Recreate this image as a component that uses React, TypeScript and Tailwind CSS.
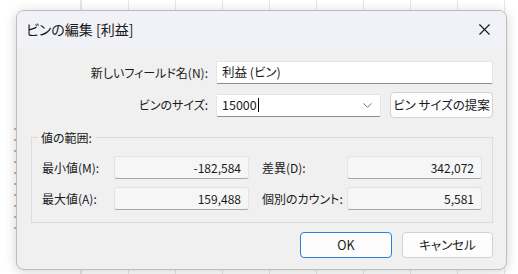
import { X, ChevronDown } from 'lucide-react'

const FONT = '"Noto Sans CJK JP", "Noto Sans", sans-serif'

function ReadField({ value }: { value: string }) {
  return (
    <div className="flex h-[23px] w-[135px] items-center justify-end rounded-[3px] border border-[#e3e3e3] border-b-[#a8a8a8] bg-[#f6f6f6] pr-[7px] text-[12px] text-[#1a1a1a]">
      {value}
    </div>
  )
}

export default function App() {
  const cols = Array.from({ length: 11 })

  return (
    <div
      className="relative h-[274px] w-[518px] overflow-hidden bg-white"
      style={{ fontFamily: FONT, fontFeatureSettings: '"palt"' }}
    >
      {/* spreadsheet behind the dialog */}
      <div className="flex h-full pl-[80px]">
        <div className="h-full w-[9px] border-l border-[#e6e6e6]" />
        {cols.map((_, i) => (
          <div key={i} className="h-full w-[47px] shrink-0 border-l border-[#e6e6e6]" />
        ))}
      </div>
      <div className="absolute left-[14px] top-[128px] flex flex-col gap-[9px]">
        {Array.from({ length: 10 }).map((_, i) => (
          <div key={i} className="h-[2px] w-[2px] bg-[#d8b08a]" />
        ))}
      </div>

      {/* dialog */}
      <div className="absolute left-[16px] top-[10px] flex h-[260px] w-[491px] flex-col overflow-hidden rounded-[8px] border border-[#bdbdbd] bg-[#f0f0f0] shadow-[0_2px_12px_rgba(0,0,0,0.18)]">
        <div className="flex h-[37px] shrink-0 items-center justify-between bg-[#f1f2f7] pl-[9px] pr-[12px]">
          <span className="text-[14px] text-[#1a1a1a]">ビンの編集 [利益]</span>
          <X size={19} strokeWidth={1.4} className="text-[#1a1a1a]" />
        </div>

        <div className="flex flex-1 flex-col px-[13px] pt-[13px] text-[12px] text-[#1a1a1a]">
          <div className="flex items-center">
            <div className="w-[186px] pr-[8px] text-right">新しいフィールド名(N):</div>
            <div className="flex h-[23px] flex-1 items-center rounded-[2px] border border-[#e5e5e5] border-b-[#8f8f8f] bg-white pl-[5px] text-[12.5px]">
              利益 (ビン)
            </div>
          </div>

          <div className="mt-[8px] flex items-center">
            <div className="w-[186px] pr-[8px] text-right">ビンのサイズ:</div>
            <div className="flex h-[23px] w-[165px] items-center justify-between rounded-[2px] border border-[#e5e5e5] border-b-[#8f8f8f] bg-white pl-[5px] pr-[5px] text-[12.5px]">
              <span className="flex items-center">
                15000<span className="ml-[1px] inline-block h-[14px] w-[1px] bg-black" />
              </span>
              <ChevronDown size={15} strokeWidth={1.3} className="text-[#555]" />
            </div>
            <div className="ml-auto flex h-[26px] w-[103px] items-center justify-center rounded-[4px] border border-[#d2d2d2] bg-[#fdfdfd] text-[12.5px]">
              ビン サイズの提案
            </div>
          </div>

          <div className="relative mt-[19px] ml-[1px] h-[86px] border border-[#dcdcdc]">
            <span className="absolute -top-[9px] left-[6px] bg-[#f0f0f0] px-[3px] text-[12px]">値の範囲:</span>
            <div className="flex flex-col gap-[8px] pl-[82px] pt-[18px]">
              <div className="flex items-center">
                <span className="-ml-[72px] w-[72px]">最小値(M):</span>
                <ReadField value="-182,584" />
                <span className="ml-[13px] w-[85px]">差異(D):</span>
                <ReadField value="342,072" />
              </div>
              <div className="flex items-center">
                <span className="-ml-[72px] w-[72px]">最大値(A):</span>
                <ReadField value="159,488" />
                <span className="ml-[13px] w-[85px]">個別のカウント:</span>
                <ReadField value="5,581" />
              </div>
            </div>
          </div>

          <div className="mt-[9px] flex justify-end gap-[10px]">
            <div className="flex h-[26px] w-[92px] items-center justify-center rounded-[4px] border-[1.5px] border-[#2b7fd4] bg-[#fdfdfd] text-[12.5px]">
              OK
            </div>
            <div className="flex h-[26px] w-[91px] items-center justify-center rounded-[4px] border border-[#d2d2d2] bg-[#fdfdfd] text-[12.5px]">
              キャンセル
            </div>
          </div>
        </div>
      </div>
    </div>
  )
}
